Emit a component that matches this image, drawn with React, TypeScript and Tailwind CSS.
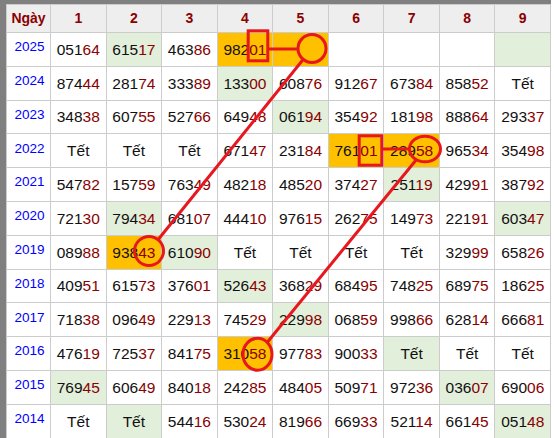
import { Fragment } from 'react'

type Cell = { v: string; bg?: 'g' | 'o' }

const c = (v: string, bg?: 'g' | 'o'): Cell => ({ v, bg })

const ROWS: [string, Cell[]][] = [
  ['2025', [c('05164'), c('61517', 'g'), c('46386'), c('98201', 'o'), c('', 'o'), c(''), c(''), c(''), c('', 'g')]],
  ['2024', [c('87444'), c('28174'), c('33389'), c('13300', 'g'), c('60876'), c('91267'), c('67384'), c('85852'), c('Tết')]],
  ['2023', [c('34838'), c('60755'), c('52766'), c('64948'), c('06194', 'g'), c('35492'), c('18198'), c('88864'), c('29337')]],
  ['2022', [c('Tết'), c('Tết'), c('Tết'), c('67147'), c('23184'), c('76101', 'o'), c('28958', 'o'), c('96534'), c('35498')]],
  ['2021', [c('54782'), c('15759'), c('76349'), c('48218'), c('48520'), c('37427'), c('25119', 'g'), c('42991'), c('38792')]],
  ['2020', [c('72130'), c('79434', 'g'), c('68107'), c('44410'), c('97615'), c('26275'), c('14973'), c('22191'), c('60347', 'g')]],
  ['2019', [c('08988'), c('93843', 'o'), c('61090', 'g'), c('Tết'), c('Tết'), c('Tết'), c('Tết'), c('32999'), c('65826')]],
  ['2018', [c('40951'), c('61573'), c('37601'), c('52643', 'g'), c('36829'), c('68495'), c('74825'), c('68975'), c('18625')]],
  ['2017', [c('71838'), c('09649'), c('22913'), c('74529'), c('22998', 'g'), c('06859'), c('99866'), c('62814'), c('66681')]],
  ['2016', [c('47619'), c('72537'), c('84175'), c('31058', 'o'), c('97783'), c('90033'), c('Tết', 'g'), c('Tết'), c('Tết')]],
  ['2015', [c('76945', 'g'), c('60649'), c('84018'), c('24285'), c('48405'), c('50971'), c('97236'), c('03607', 'g'), c('69006')]],
  ['2014', [c('Tết'), c('Tết', 'g'), c('54416'), c('53024'), c('81966'), c('66933'), c('52114'), c('66145'), c('05148', 'g')]],
]

const RED = '#e8161f'

function NumText({ v }: { v: string }) {
  if (v === 'Tết' || v.length < 5) return <span className="text-[#111]">{v}</span>
  return (
    <span>
      <span className="text-[#111]">{v.slice(0, 3)}</span>
      <span className="text-[#8b0000]">{v.slice(3)}</span>
    </span>
  )
}

// end point on the rim of circle a, aimed at b
function rim(a: number[], b: number[], r: number) {
  const dx = b[0] - a[0]
  const dy = b[1] - a[1]
  const d = Math.hypot(dx, dy)
  return [a[0] + (dx / d) * r, a[1] + (dy / d) * r]
}

function Marks() {
  const c1 = [312, 48.5]
  const c2 = [149, 251]
  const e1 = [425, 149]
  const c3 = [257.5, 354.3]
  const a1 = rim(c1, c2, 14.5)
  const a2 = rim(c2, c1, 15)
  const b1 = rim(e1, c3, 13.5)
  const b2 = rim(c3, e1, 15.5)
  return (
    <svg
      className="absolute left-0 top-0 pointer-events-none"
      width={554}
      height={438}
      viewBox="0 0 554 438"
      fill="none"
      stroke={RED}
      strokeWidth={3}
    >
      <rect x={248.2} y={30.8} width={19.6} height={30} />
      <line x1={269} y1={49} x2={297.5} y2={49} />
      <circle cx={c1[0]} cy={c1[1]} r={14} />
      <line x1={a1[0]} y1={a1[1]} x2={a2[0]} y2={a2[1]} />
      <circle cx={c2[0]} cy={c2[1]} r={14.5} />

      <rect x={359.2} y={135.8} width={22.6} height={29.4} />
      <line x1={383} y1={149} x2={409.5} y2={149} />
      <ellipse cx={e1[0]} cy={e1[1]} rx={15.5} ry={12.8} />
      <line x1={b1[0]} y1={b1[1]} x2={b2[0]} y2={b2[1]} />
      <ellipse cx={c3[0]} cy={c3[1]} rx={14.5} ry={16} />
    </svg>
  )
}

export default function App() {
  return (
    <div
      className="relative w-[554px] h-[438px] overflow-hidden bg-white"
      style={{ fontFamily: '"Liberation Sans", Arial, sans-serif' }}
    >
      <div className="border-l-[6px] border-t-[4px] border-[#808080] w-[551px]">
        <div className="grid grid-cols-[43px_repeat(9,minmax(0,1fr))] grid-rows-[27px_repeat(12,32.8px)] gap-px p-px bg-[#cccccc] w-[545px]">
          <div className="bg-[#eeeeee] flex items-center justify-center text-[14px] font-bold text-[#8b0000]">
            Ngày
          </div>
          {[1, 2, 3, 4, 5, 6, 7, 8, 9].map(n => (
            <div
              key={n}
              className="bg-[#eeeeee] flex items-center justify-center text-[14px] font-bold text-[#8b0000]"
            >
              {n}
            </div>
          ))}

          {ROWS.map(([year, cells]) => (
            <Fragment key={year}>
              <div className="bg-white flex items-center justify-center pb-[4px] pl-[2px] text-[13.5px] text-[#0000ff]">
                {year}
              </div>
              {cells.map((cell, i) => (
                <div
                  key={i}
                  className={
                    'flex items-center justify-center text-[15.5px] ' +
                    (cell.bg === 'g' ? 'bg-[#e2efda]' : cell.bg === 'o' ? 'bg-[#ffc000]' : 'bg-white')
                  }
                >
                  <NumText v={cell.v} />
                </div>
              ))}
            </Fragment>
          ))}
        </div>
      </div>
      <Marks />
    </div>
  )
}
